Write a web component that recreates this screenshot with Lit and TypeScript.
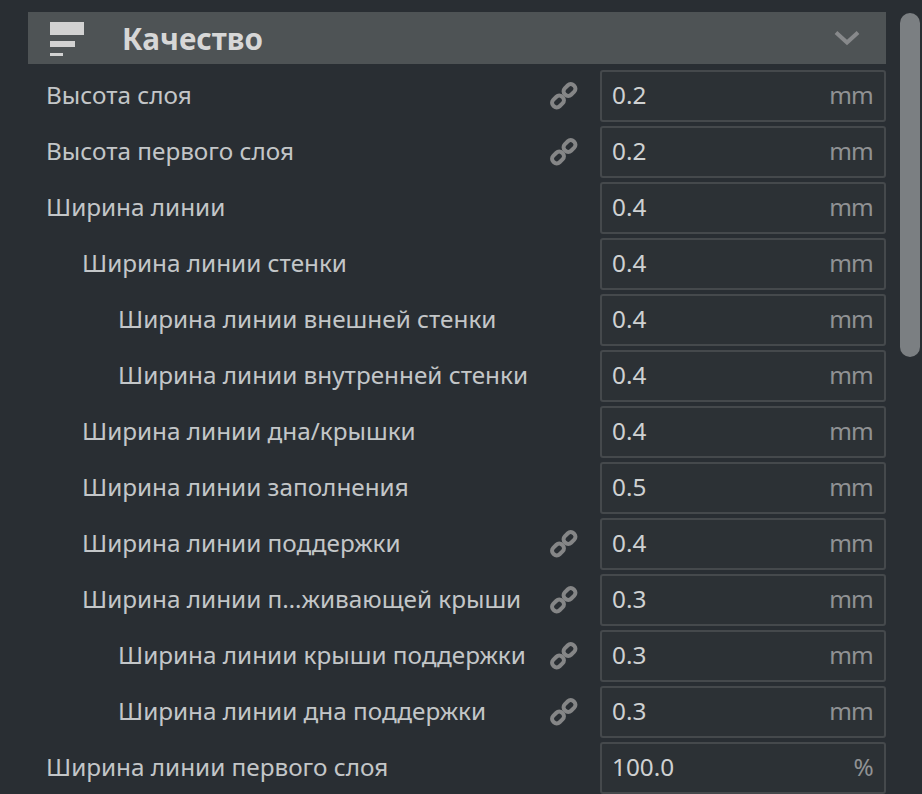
import { LitElement, html, css } from "lit";
import { customElement } from "lit/decorators.js";

interface Row { label: string; depth: number; link: boolean; value: string; unit: string; }

const rows: Row[] = [
  { label: "Высота слоя", depth: 0, link: true, value: "0.2", unit: "mm" },
  { label: "Высота первого слоя", depth: 0, link: true, value: "0.2", unit: "mm" },
  { label: "Ширина линии", depth: 0, link: false, value: "0.4", unit: "mm" },
  { label: "Ширина линии стенки", depth: 1, link: false, value: "0.4", unit: "mm" },
  { label: "Ширина линии внешней стенки", depth: 2, link: false, value: "0.4", unit: "mm" },
  { label: "Ширина линии внутренней стенки", depth: 2, link: false, value: "0.4", unit: "mm" },
  { label: "Ширина линии дна/крышки", depth: 1, link: false, value: "0.4", unit: "mm" },
  { label: "Ширина линии заполнения", depth: 1, link: false, value: "0.5", unit: "mm" },
  { label: "Ширина линии поддержки", depth: 1, link: true, value: "0.4", unit: "mm" },
  { label: "Ширина линии п…живающей крыши", depth: 1, link: true, value: "0.3", unit: "mm" },
  { label: "Ширина линии крыши поддержки", depth: 2, link: true, value: "0.3", unit: "mm" },
  { label: "Ширина линии дна поддержки", depth: 2, link: true, value: "0.3", unit: "mm" },
  { label: "Ширина линии первого слоя", depth: 0, link: false, value: "100.0", unit: "%" },
];

@customElement("app-root")
export class AppRoot extends LitElement {
  static styles = css`
    :host {
      display: block;
      width: 922px;
      height: 794px;
      overflow: hidden;
      background: #292e33;
      font-family: "Noto Sans", sans-serif;
      color: #c8c8c8;
    }
    .page {
      display: flex;
      padding: 12px 2px 0 28px;
      gap: 14px;
    }
    .panel {
      width: 858px;
      flex: none;
    }
    .scroll {
      width: 20px;
      height: 344px;
      margin-top: 1px;
      border-radius: 10px;
      background: #7b7f82;
    }
    .head {
      height: 52px;
      background: #4e5355;
      display: flex;
      align-items: center;
      padding: 0 26px 0 22px;
      margin-bottom: 6px;
    }
    .head-icon { display: block; flex: none; margin-top: 2px; }
    .title {
      margin-left: 38px;
      flex: 1;
      font-size: 29.7px;
      font-weight: 700;
      line-height: 52px;
      padding-top: 2px;
      color: #d7d7d7;
    }
    .chev { display: block; flex: none; }
    .row {
      display: flex;
      align-items: center;
      height: 52px;
      margin-bottom: 4px;
    }
    .label {
      flex: 1;
      min-width: 0;
      font-size: 24.3px;
      line-height: 50px;
      padding-bottom: 2px;
      white-space: nowrap;
      color: #c3c6c8;
    }
    .d0 { padding-left: 18px; }
    .d1 { padding-left: 54px; }
    .d2 { padding-left: 90px; }
    .link {
      display: block;
      flex: none;
      margin-right: 21px;
    }
    .field {
      flex: none;
      box-sizing: border-box;
      width: 286px;
      height: 52px;
      display: flex;
      align-items: center;
      justify-content: space-between;
      padding: 0 11px 4px 10px;
      border: 2px solid #45494c;
      border-radius: 3px;
      background: #2c3135;
      font-size: 24.3px;
    }
    .value { color: #cfd1d2; }
    .unit { color: #909294; letter-spacing: -0.8px; }
  `;

  private linkIcon() {
    return html`<svg class="link" width="30" height="30" viewBox="0 0 30 30" fill="none" stroke="#858687" stroke-width="4">
      <rect x="16" y="2.75" width="9" height="12.5" rx="4" transform="rotate(45 20.5 9)"></rect>
      <rect x="4.5" y="14.25" width="9" height="12.5" rx="4" transform="rotate(45 9 20.5)"></rect>
    </svg>`;
  }

  render() {
    return html`<div class="page">
      <div class="panel">
        <div class="head">
          <svg class="head-icon" width="34" height="34" viewBox="0 0 34 34" fill="#d2d2d2">
            <rect x="0" y="0" width="34" height="13"></rect>
            <rect x="0" y="19" width="25" height="6"></rect>
            <rect x="0" y="31" width="13" height="3"></rect>
          </svg>
          <div class="title">Качество</div>
          <svg class="chev" width="26" height="16" viewBox="0 0 26 16" fill="none" stroke="#87898b" stroke-width="4">
            <path d="M2 2.5 L13 12.5 L24 2.5"></path>
          </svg>
        </div>
        ${rows.map(
          (r) => html`<div class="row">
            <div class="label d${r.depth}">${r.label}</div>
            ${r.link ? this.linkIcon() : ""}
            <div class="field"><span class="value">${r.value}</span><span class="unit">${r.unit}</span></div>
          </div>`
        )}
      </div>
      <div class="scroll"></div>
    </div>`;
  }
}
